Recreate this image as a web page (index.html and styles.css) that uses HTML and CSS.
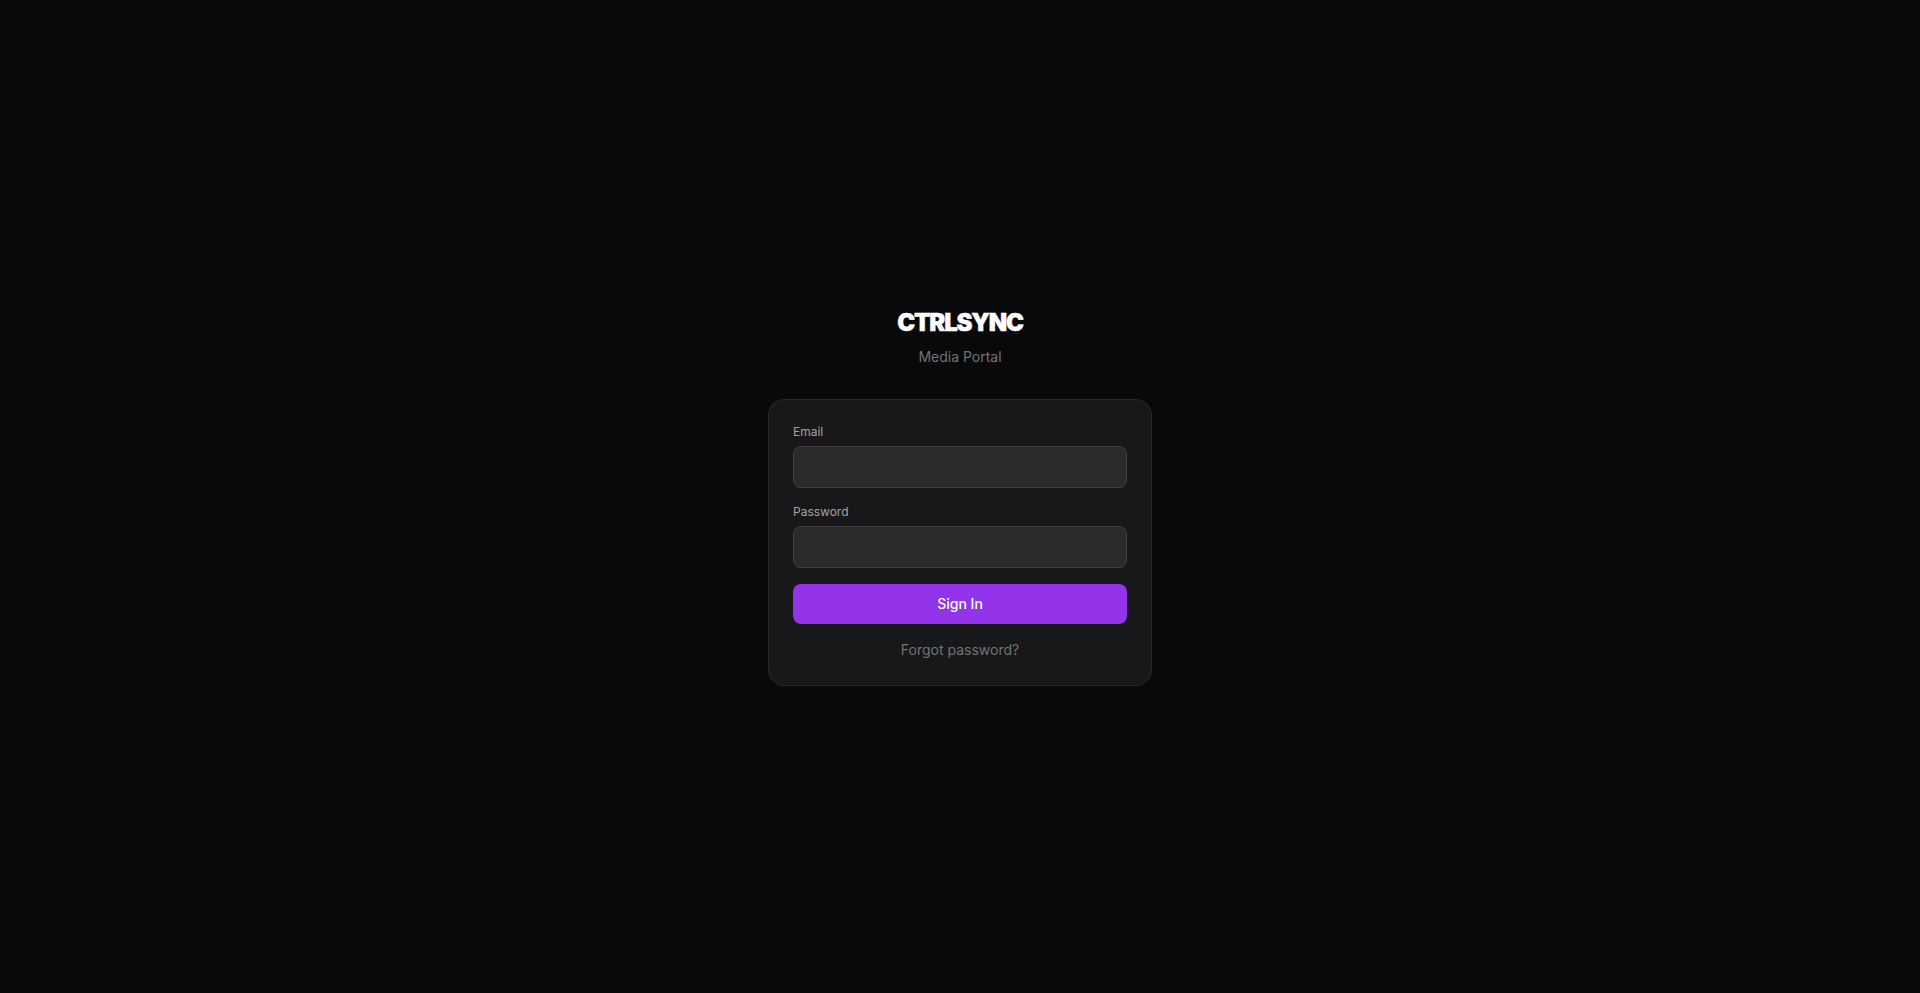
FILE: index.html
```html
<!DOCTYPE html>
<html lang="en">
<head>
<meta charset="utf-8">
<title>CTRLSYNC Media Portal</title>
<link rel="stylesheet" href="styles.css">
</head>
<body>
<main class="page">
  <div class="wrap">
    <header class="brand">
      <h1 class="logo">CTRLSYNC</h1>
      <p class="tagline">Media Portal</p>
    </header>
    <form class="card">
      <div class="field">
        <label class="label" for="email">Email</label>
        <input class="input" id="email" type="email">
      </div>
      <div class="field">
        <label class="label" for="password">Password</label>
        <input class="input" id="password" type="password">
      </div>
      <button class="submit" type="button">Sign In</button>
      <a class="forgot" href="#">Forgot password?</a>
    </form>
  </div>
</main>
</body>
</html>
```

FILE: styles.css
```css
* { box-sizing: border-box; }
html, body { margin: 0; height: 100%; }
body {
  background: #09090b;
  font-family: Inter, "Liberation Sans", sans-serif;
  color: #fff;
}
.page {
  min-height: 100%;
  display: flex;
  align-items: center;
  justify-content: center;
}
.wrap { width: 384px; }
.brand { text-align: center; margin-bottom: 32px; }
.logo {
  margin: 0;
  font-size: 24px;
  line-height: 32px;
  font-weight: 900;
  letter-spacing: -1.2px;
  -webkit-text-stroke: 0.4px #fff;
  color: #fff;
}
.tagline {
  margin: 8px 0 0;
  font-size: 14px;
  line-height: 20px;
  color: #737373;
}
.card {
  display: flex;
  flex-direction: column;
  gap: 16px;
  padding: 24px 24px 25px;
  background: #18181a;
  border: 1px solid #2a2a2c;
  border-radius: 16px;
}
.field { display: flex; flex-direction: column; gap: 6px; }
.label {
  font-size: 12px;
  line-height: 16px;
  color: #a3a3a3;
}
.input {
  display: block;
  width: 100%;
  height: 42px;
  background: #2a2a2c;
  border: 1px solid #404042;
  border-radius: 8px;
  color: #fff;
  font: inherit;
  outline: none;
}
.submit {
  height: 40px;
  padding: 0 0 2px;
  border: 0;
  border-radius: 8px;
  background: #9333ea;
  color: #fff;
  font-family: inherit;
  font-size: 14px;
  font-weight: 500;
}
.forgot {
  text-align: center;
  font-size: 14px;
  line-height: 20px;
  color: #737373;
  text-decoration: none;
}
```
